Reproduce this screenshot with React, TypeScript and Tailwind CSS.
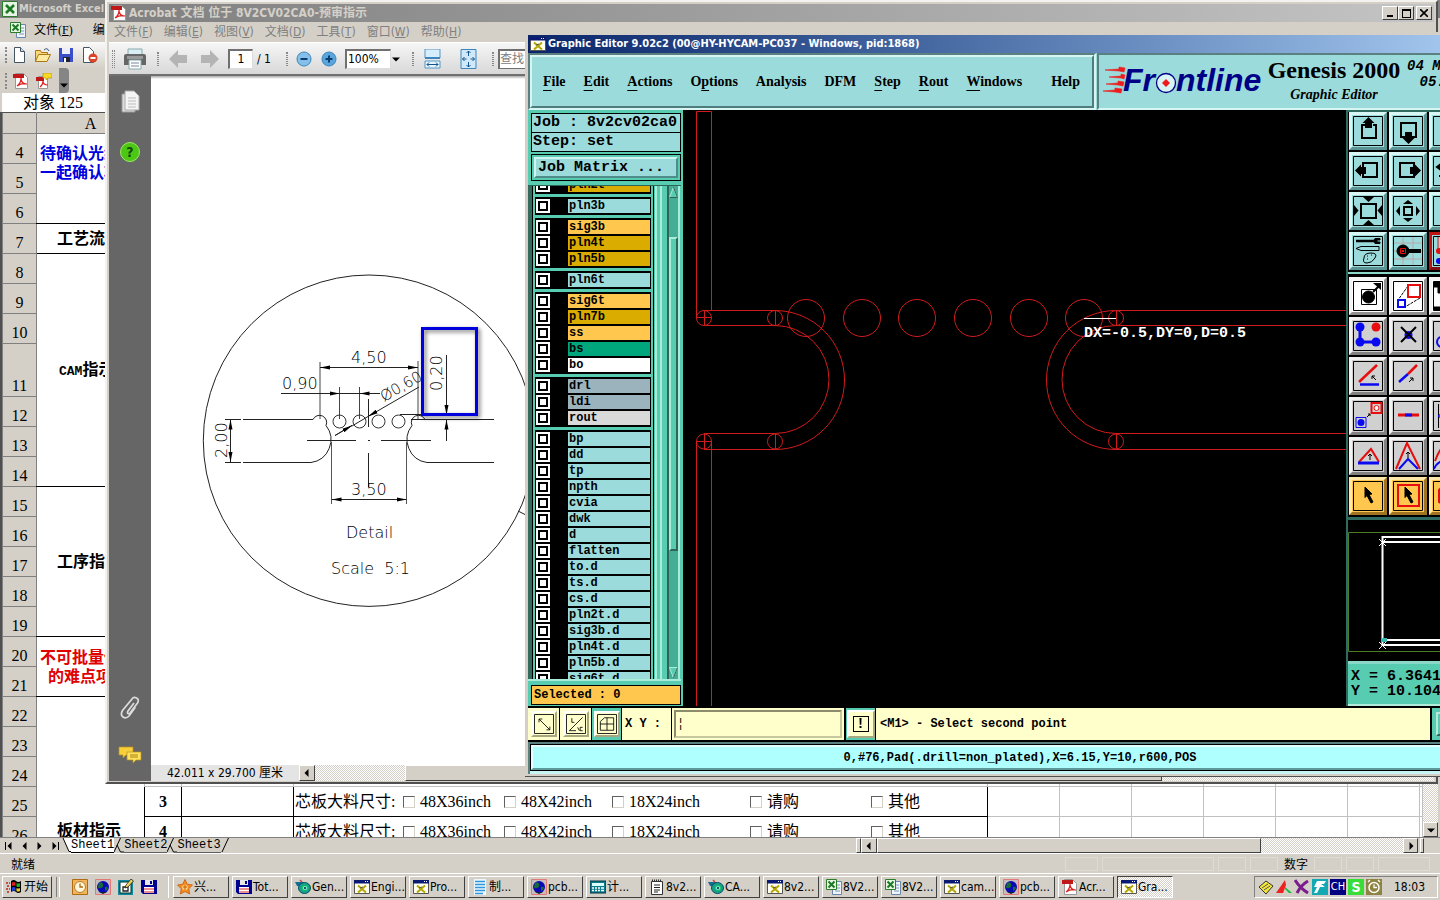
import React from "react";

/* ---------- small shared icons ---------- */

type IconName =
  | "star" | "floppy" | "gear" | "xwin" | "doc" | "globe" | "calc" | "note" | "excel" | "pdf" | "clock" | "pen" | "win";

function Icon({ name }: { name: IconName }) {
  return (
    <svg viewBox="0 0 16 16" className="size-4 shrink-0" aria-hidden="true">
      {name === "star" && (
        <>
          <path d="M8 .5l2.3 4.7 5.2.8-3.7 3.7.9 5.3L8 12.5l-4.7 2.5.9-5.3L.5 6l5.2-.8z" fill="#f58a1f" stroke="#c85a08" strokeWidth=".8" />
          <circle cx="8" cy="8.5" r="2.8" fill="#ffd27a" />
          <path d="M6 8h4M8 6v5" stroke="#c85a08" />
        </>
      )}
      {name === "floppy" && (
        <>
          <path d="M0 1h16v14H2l-2-2z" fill="#000090" />
          <path d="M4 1h8v5H4z" fill="#e8e8e8" />
          <path d="M9 2h2v3H9z" fill="#000090" />
          <path d="M3 8h10v6H3z" fill="#fff" />
          <path d="M3 10h10M3 13h10" stroke="#d22" strokeWidth="1.2" />
        </>
      )}
      {name === "gear" && (
        <>
          <path d="M0 3h9l-2 4H2z" fill="#1a6a96" />
          <ellipse cx="9.5" cy="9" rx="6" ry="5.5" fill="#18a08c" stroke="#064f5c" />
          <ellipse cx="10" cy="9" rx="3" ry="2.5" fill="#7fe6d2" stroke="#0b5" />
          <circle cx="10" cy="9" r="1" fill="#024" />
          <path d="M5 1l2 2" stroke="#b44" strokeWidth="1.5" />
        </>
      )}
      {name === "xwin" && (
        <>
          <path d="M.5 1.5h15v13H.5z" fill="#fffff4" stroke="#555" />
          <path d="M0 1h16v3.5H0z" fill="#0a1a72" />
          <path d="M11 2h1v1h-1zM13 2h1v1h-1z" fill="#fff" />
          <path d="M4 6.5l8 7M12 6.5l-8 7" stroke="#b4a800" strokeWidth="2" />
          <path d="M6 9l3-1" stroke="#555" />
        </>
      )}
      {name === "doc" && (
        <>
          <path d="M2 0h12v16H2z" fill="#eef8ff" />
          <path d="M3 2.5h10M3 5.5h10M3 8.5h10M3 11.5h10M3 14.5h8" stroke="#2f95dc" strokeWidth="1.5" />
        </>
      )}
      {name === "globe" && (
        <>
          <path d="M.5.5h15v15H.5z" fill="#c9bcbc" stroke="#e27878" />
          <circle cx="8" cy="8" r="6" fill="#0a0ab4" />
          <path d="M4 4q3-2 4 1t-2 4-3-1zM10 8q3-1 3 1t-3 3z" fill="#176a3a" />
          <path d="M4 13l8 0-4 2z" fill="#123" />
        </>
      )}
      {name === "calc" && (
        <>
          <path d="M0 2h16v12H0z" fill="#0a7c8c" stroke="#034" />
          <path d="M2 4h12v3H2z" fill="#d9ffff" />
          <path d="M2 9h2M5 9h2M8 9h2M11 9h3M2 11.5h2M5 11.5h2M8 11.5h2M11 11.5h3" stroke="#fff" strokeWidth="1.3" />
        </>
      )}
      {name === "note" && (
        <>
          <path d="M2.5 2.5h11v13h-11z" fill="#fff" stroke="#333" />
          <path d="M3 1.5h10" stroke="#333" strokeWidth="2" strokeDasharray="1 1" />
          <path d="M5 6h6M5 8.5h6M5 11h6M5 13h4" stroke="#222" />
        </>
      )}
      {name === "excel" && (
        <>
          <path d="M6.5 2.5h9v13h-9z" fill="#eef4fb" stroke="#6a86ac" />
          <path d="M9 6h5M9 9h5M9 12h5" stroke="#7c98bd" />
          <path d="M.5.5h10v10H.5z" fill="#e7f6e5" stroke="#2b7d2b" />
          <path d="M2.5 2.5l6 6M8.5 2.5l-6 6" stroke="#1c7a22" strokeWidth="2" />
        </>
      )}
      {name === "pdf" && (
        <>
          <path d="M2.5.5h8l4 4v11h-12z" fill="#fff" stroke="#999" />
          <path d="M0 1h11v4H0z" fill="#c01818" />
          <path d="M4 13c3-2 4-5 4-8 0 4 2 6 6 6-4-1-7 0-10 2z" fill="none" stroke="#d22" strokeWidth="1.2" />
        </>
      )}
      {name === "clock" && (
        <>
          <path d="M.5.5h15v15H.5z" fill="#f3b55c" stroke="#b06a10" />
          <circle cx="8" cy="8" r="5.5" fill="#fff6dc" stroke="#b97a22" />
          <path d="M8 4.5V8h3" stroke="#b06a10" fill="none" strokeWidth="1.3" />
        </>
      )}
      {name === "pen" && (
        <>
          <path d="M0 1h15v15H0z" fill="#0f8a9c" />
          <path d="M2 3h11v11H2z" fill="#fff" stroke="#033" />
          <path d="M5 8v4h5V8z" fill="none" stroke="#222" strokeWidth="1.3" />
          <path d="M7 9l1-3L13 0l2.500 2L10 8z" fill="#f2d25a" stroke="#222" strokeWidth=".8" />
        </>
      )}
      {name === "win" && (
        <>
          <path d="M5 2q3-2 5 0t5 0v11q-3 2-5 0t-5 0z" fill="#000" />
          <path d="M6 3.5q2-1 3.5 0V7Q8 6 6 7z" fill="#e02020" />
          <path d="M10.5 4q2 1 3.5 0v3.5q-2 1-3.5 0z" fill="#20b020" />
          <path d="M6 8.5q2-1 3.5 0V12Q8 11 6 12z" fill="#2040e0" />
          <path d="M10.5 9q2 1 3.5 0v3q-2 1-3.5 0z" fill="#f0d020" />
          <path d="M0 4h4M1 7h3M0 10h4M1 13h3" stroke="#c02020" strokeWidth="1.5" strokeDasharray="2 1" />
        </>
      )}
    </svg>
  );
}

function Triangle({ dir }: { dir: "left" | "right" | "down" }) {
  const d = dir === "left" ? "M5.5 0v8L1.500 4z" : dir === "right" ? "M2.5 0v8l4-4z" : "M0 2.500h8l-4 4z";
  return (
    <svg viewBox="0 0 8 8" className="size-2 shrink-0" aria-hidden="true">
      <path d={d} fill="#000" />
    </svg>
  );
}

const raised = "border border-t-white border-l-white border-r-[#404040] border-b-[#404040] bg-[#d4d0c8]";
const dither = "bg-[repeating-conic-gradient(#ffffff_0_25%,#d4d0c8_0_50%)] bg-[length:2px_2px]";

/* ---------- spreadsheet ---------- */

const sheetRows: { n: number; tall?: boolean; label?: React.ReactNode; span?: number; tone?: string; align?: string }[] = [
  { n: 4, span: 3, tone: "text-[#0000e0]", align: "pl-[3px] pt-[10px] align-top text-left", label: <>待确认光绘<br />一起确认项</> },
  { n: 5 },
  { n: 6 },
  { n: 7, span: 1, tone: "text-black", align: "pl-5 align-middle text-left", label: "工艺流程" },
  { n: 8, span: 7, tone: "text-black", align: "pl-[22px] align-middle text-left", label: <><span className="text-[13px] font-['Liberation_Mono',monospace]">CAM</span>指示</> },
  { n: 9 },
  { n: 10 },
  { n: 11, tall: true },
  { n: 12 },
  { n: 13 },
  { n: 14 },
  { n: 15, span: 5, tone: "text-black", align: "pl-5 align-middle text-left", label: "工序指示" },
  { n: 16 },
  { n: 17 },
  { n: 18 },
  { n: 19 },
  { n: 20, span: 2, tone: "text-[#e00000]", align: "pl-[3px] align-middle text-left", label: <>不可批量做<br /><span className="pl-2">的难点项目</span></> },
  { n: 21 },
  { n: 22, span: 5, tone: "text-black", align: "pl-5 pb-[6px] align-bottom text-left", label: "板材指示" },
  { n: 23 },
  { n: 24 },
  { n: 25 },
  { n: 26 },
];

function Materials({ row }: { row: number }) {
  return (
    <div className="grid h-[29px] grid-cols-[108px_101px_108px_138px_121px_1fr] items-center overflow-hidden whitespace-nowrap pl-px text-base leading-5">
      <span>芯板大料尺寸:</span>
      {["48X36inch", "48X42inch", "18X24inch", "请购", "其他"].map((t) => (
        <label key={t} htmlFor={`m${row}-${t}`} className="flex items-center gap-[5px]">
          <input
            id={`m${row}-${t}`}
            type="checkbox"
            className="size-3 appearance-none border border-t-[#606060] border-l-[#606060] border-r-[#d4d0c8] border-b-[#d4d0c8] bg-white"
          />
          {t}
        </label>
      ))}
    </div>
  );
}

function Excel() {
  return (
    <section className="flex min-h-0 flex-1 flex-col bg-[#d4d0c8]">
      <header className="flex h-[18px] items-center gap-px bg-[#808080] pl-0.5 text-[#d4d0c8] font-['DejaVu_Sans_Condensed','DejaVu_Sans','Noto_Sans_CJK_SC',sans-serif]">
        <svg viewBox="0 0 16 16" className="size-4" aria-hidden="true">
          <path d="M.5.5h15v15H.5z" fill="#e6f4e4" stroke="#2b7d2b" />
          <path d="M4 4l8 8M12 4l-8 8" stroke="#1c7a22" strokeWidth="2.6" />
        </svg>
        <h1 className="whitespace-nowrap text-[11px] font-bold">Microsoft Excel</h1>
      </header>
      <nav className="flex h-6 items-center gap-5 pl-2.5 text-xs font-['Liberation_Serif','Noto_Sans_CJK_SC',serif]">
        <Icon name="excel" />
        <button className="-ml-3">文件(<u>F</u>)</button>
        <button>编辑(<u>E</u>)</button>
      </nav>
      <div className="flex h-[26px] items-center gap-2 bg-linear-to-b from-[#fafafa] to-[#d4d0c8] pl-[5px]">
        <span className="h-4 w-px border-l-2 border-dotted border-[#888]" />
        <button aria-label="New" className="-ml-1">
          <svg viewBox="0 0 16 16" className="size-4"><path d="M3.5.5h6l4 4v11h-10z" fill="#fff" stroke="#456" /><path d="M9.5.5v4h4" fill="#cde" stroke="#456" /></svg>
        </button>
        <button aria-label="Open">
          <svg viewBox="0 0 16 16" className="size-4"><path d="M.5 14.5v-11h5l1 2h6v3" fill="#f9d778" stroke="#a87818" /><path d="M.5 14.5l3-7h12l-3.5 7z" fill="#ffeaa0" stroke="#a87818" /><path d="M9 3q3-3 5 1" fill="none" stroke="#357" /></svg>
        </button>
        <button aria-label="Save" className="-ml-px">
          <svg viewBox="0 0 16 16" className="size-4"><path d="M1 1h14v14H1z" fill="#3b50c8" /><path d="M4 1h8v6H4z" fill="#eef" /><path d="M5 10h7v5H5z" fill="#223" /><path d="M6 11h2v4H6z" fill="#fff" /></svg>
        </button>
        <button aria-label="Permission">
          <svg viewBox="0 0 16 16" className="size-4"><path d="M1.5.5h6l4 4v11h-10z" fill="#fff" stroke="#456" /><circle cx="11" cy="11" r="4.5" fill="#d8442a" /><path d="M8.5 11h5" stroke="#fff" strokeWidth="2" /></svg>
        </button>
      </div>
      <div className="flex h-[25px] items-center gap-[7px] pl-[5px]">
        <span className="h-4 w-px border-l-2 border-dotted border-[#888]" />
        <button aria-label="Convert to PDF" className="-ml-px"><Icon name="pdf" /></button>
        <button aria-label="PDF and comment">
          <svg viewBox="0 0 16 16" className="size-4"><path d="M2.5 3.5h9v12h-9z" fill="#fff" stroke="#999" /><path d="M0 4h8v4H0z" fill="#c01818" /><path d="M4 14c3-2 3-4 3-6 0 3 2 4 5 4" fill="none" stroke="#d22" strokeWidth="1.2" /><path d="M7 0h9v5h-4l-2 2V5H7z" fill="#f8d820" stroke="#a88a00" strokeWidth=".6" /></svg>
        </button>
        <span className="flex h-[25px] w-2.5 items-end justify-center rounded-r-sm bg-[#858585] pb-1"><Triangle dir="down" /></span>
      </div>
      <label className="ml-0.5 flex h-[19px] items-center bg-white">
        <input aria-label="Name box" defaultValue="对象 125" className="h-[18px] w-full bg-white pl-[21px] text-base leading-[18px] font-['Liberation_Serif','Noto_Sans_CJK_SC',serif]" />
      </label>
      <div className="flex min-h-0 flex-1 border-l-2 border-[#505050] font-['Liberation_Serif','Noto_Sans_CJK_SC',serif]">
        <div className="min-w-0 flex-1 overflow-hidden bg-white">
          <table className="w-full table-fixed border-collapse text-base leading-[19px]">
            <colgroup>
              <col className="w-[34px]" /><col className="w-[108px]" /><col className="w-[37px]" /><col className="w-[112px]" /><col className="w-[694px]" />
              <col className="w-[72px]" /><col className="w-[72px]" /><col className="w-[72px]" /><col className="w-[72px]" /><col className="w-[72px]" /><col className="w-[72px]" /><col />
            </colgroup>
            <thead>
              <tr className="h-[21px] bg-[#d4d0c8]">
                <th className="border border-t-[#505050] border-[#808080]" />
                {["A", "B", "C", "D", "E", "F", "G", "H", "I", "J", "K"].map((c) => (
                  <th key={c} className="border border-t-[#505050] border-[#808080] p-0 pt-0.5 font-normal leading-[18px]">{c}</th>
                ))}
              </tr>
            </thead>
            <tbody>
              {sheetRows.map((r) => {
                const material = r.n >= 25;
                const edge = material ? "border-black" : "border-[#c0c0c0]";
                return (
                  <tr key={r.n} className={r.tall ? "h-[53px]" : "h-[30px]"}>
                    <th className="border border-[#808080] bg-[#d4d0c8] p-0 pb-px align-bottom font-normal">{r.n}</th>
                    {r.label && (
                      <td rowSpan={r.span} className={`overflow-hidden border-y border-black p-0 font-bold whitespace-nowrap ${r.tone} ${r.align}`}>{r.label}</td>
                    )}
                    <td className={`border p-0 text-center font-bold ${edge}`}>{material ? r.n - 22 : ""}</td>
                    <td className={`border p-0 ${edge}`} />
                    <td className={`border p-0 ${edge}`}>{material && <Materials row={r.n} />}</td>
                    {[0, 1, 2, 3, 4, 5, 6].map((i) => (
                      <td key={i} className="border border-[#c0c0c0] p-0" />
                    ))}
                  </tr>
                );
              })}
            </tbody>
          </table>
        </div>
        <div className={`flex w-[17px] flex-col justify-end border-r-2 border-[#d4d0c8] ${dither}`}>
          <button aria-label="Scroll down" className={`flex size-[15px] items-center justify-center ${raised}`}><Triangle dir="down" /></button>
        </div>
      </div>
      <div className="flex h-4 items-center border-t border-[#808080] text-xs leading-4">
        <div className="flex w-[62px] items-center justify-around pl-0.5">
          <button aria-label="First sheet" className="flex"><span className="h-2 w-px bg-black" /><Triangle dir="left" /></button>
          <button aria-label="Previous sheet"><Triangle dir="left" /></button>
          <button aria-label="Next sheet"><Triangle dir="right" /></button>
          <button aria-label="Last sheet" className="flex"><Triangle dir="right" /><span className="h-2 w-px bg-black" /></button>
        </div>
        <div className="flex min-w-0 flex-1 items-center font-['Liberation_Mono',monospace]">
          <svg viewBox="0 0 9 15" className="h-[15px] w-[9px]" aria-hidden="true"><path d="M1 0l6 13.5h2V0z" fill="#fff" /><path d="M1 0l6 13.5h2" fill="none" stroke="#000" /></svg>
          <button className="border-b border-black bg-white leading-[14px]">Sheet1</button>
          {["Sheet2", "Sheet3"].map((s) => (
            <React.Fragment key={s}>
              <svg viewBox="0 0 10 15" className="h-[15px] w-2.5" aria-hidden="true"><path d="M0 14L6.5 0M3 7l3.5 7h3.5" fill="none" stroke="#000" /></svg>
              <button className="border-b border-[#606060] leading-[14px]">{s}</button>
            </React.Fragment>
          ))}
          <svg viewBox="0 0 10 15" className="h-[15px] w-2.5" aria-hidden="true"><path d="M1 14L7.5 0" fill="none" stroke="#000" /></svg>
        </div>
        <div className="flex h-[15px] w-[584px] shrink-0">
          <span className={`w-[5px] ${raised}`} />
          <button aria-label="Scroll left" className={`flex w-4 items-center justify-center ${raised}`}><Triangle dir="left" /></button>
          <span className={`w-[384px] ${raised}`} />
          <span className={`flex-1 ${dither}`} />
          <button aria-label="Scroll right" className={`flex w-[15px] items-center justify-center ${raised}`}><Triangle dir="right" /></button>
          <span className={`mr-4 ml-0.5 w-1 ${raised}`} />
        </div>
      </div>
      <footer className="flex h-5 items-center justify-between border-t border-white pr-2.5 pl-[11px] text-xs font-['Noto_Sans_CJK_SC',sans-serif]">
        <span>就绪</span>
        <div className="flex h-3.5 items-center gap-1">
          <span className="h-full w-[33px] border border-[#dedbd4]" />
          <span className="h-full w-[112px] border border-[#dedbd4]" />
          <span className="h-full w-7 border border-[#dedbd4]" />
          <span className="h-full w-7 border border-[#dedbd4]" />
          <span className="w-7 text-center leading-[14px]">数字</span>
          <span className="h-full w-7 border border-[#dedbd4]" />
          <span className="h-full w-7 border border-[#dedbd4]" />
          <span className="h-full w-[52px] border border-[#dedbd4]" />
        </div>
      </footer>
    </section>
  );
}

/* ---------- taskbar ---------- */

const tasks: [IconName, string][] = [
  ["star", "兴..."], ["floppy", "Tot..."], ["gear", "Gen..."], ["xwin", "Engi..."], ["xwin", "Pro..."], ["doc", "制..."],
  ["globe", "pcb..."], ["calc", "计..."], ["note", "8v2..."], ["gear", "CA..."], ["xwin", "8v2..."], ["excel", "8V2..."],
  ["excel", "8V2..."], ["xwin", "cam..."], ["globe", "pcb..."], ["pdf", "Acr..."], ["xwin", "Gra..."],
];

function Taskbar() {
  return (
    <nav className="flex h-[27px] shrink-0 items-center border-t border-white bg-[#d4d0c8] p-0.5 text-xs font-['DejaVu_Sans_Condensed','DejaVu_Sans','Noto_Sans_CJK_SC',sans-serif]">
      <button className={`flex h-[22px] w-[50px] items-center gap-0.5 pl-[3px] whitespace-nowrap ${raised}`}><Icon name="win" />开始</button>
      <span className="mx-1 h-5 w-1 border-x border-l-[#808080] border-r-white" />
      <div className="flex w-[104px] items-center gap-[7px] pl-2">
        {(["clock", "globe", "pen", "floppy"] as IconName[]).map((n) => (
          <button key={n} aria-label={n}><Icon name={n} /></button>
        ))}
      </div>
      <div className="flex gap-[3px] border-l border-white pl-1">
        {tasks.map(([icon, text], i) => (
          <button
            key={i}
            className={
              i === tasks.length - 1
                ? `flex h-[22px] w-14 items-center gap-px overflow-hidden border border-t-[#404040] border-l-[#404040] border-r-white border-b-white pl-[3px] whitespace-nowrap ${dither}`
                : `flex h-[22px] w-14 items-center gap-px overflow-hidden pl-[3px] whitespace-nowrap ${raised}`
            }
          >
            <Icon name={icon} />
            {text}
          </button>
        ))}
      </div>
      <div className="ml-auto flex h-[22px] w-[184px] items-center gap-0.5 border border-t-[#808080] border-l-[#808080] border-r-white border-b-white pl-[3px]">
        <svg viewBox="0 0 16 16" className="size-4" aria-hidden="true"><path d="M1 8l7-6 7 5-7 8z" fill="#f2e53a" stroke="#333" /><path d="M4 9l6-4M6 11l6-4" stroke="#555" /></svg>
        <svg viewBox="0 0 16 16" className="size-4" aria-hidden="true"><path d="M0 14L9 1l1 5-3 8z" fill="#e22" /><path d="M9 8l7 6h-3L9 10z" fill="#1b3" /></svg>
        <svg viewBox="0 0 16 16" className="size-4" aria-hidden="true"><path d="M1 1q5 8 13 13M14 2Q7 6 3 14" fill="none" stroke="#7a1c8c" strokeWidth="3" /></svg>
        <svg viewBox="0 0 16 16" className="size-4" aria-hidden="true"><path d="M0 0h16v16H0z" fill="#12a9b4" /><path d="M5 2h9l-2 3H9l4 3H8l-3 6H2l3-6H2z" fill="#fff" /></svg>
        <span className="flex size-4 items-center justify-center bg-[#000080] text-[11px] text-white">CH</span>
        <span className="flex size-4 items-center justify-center bg-[#38dd38] text-sm font-bold text-white">S</span>
        <svg viewBox="0 0 16 16" className="size-4" aria-hidden="true"><path d="M0 0h16v16H0z" fill="#8c8440" /><circle cx="8" cy="8.5" r="5" fill="none" stroke="#fff" strokeWidth="1.5" /><path d="M8 5.5v3h3M2 3l2-2M14 3l-2-2" fill="none" stroke="#fff" strokeWidth="1.3" /></svg>
        <time className="ml-auto pr-3">18:03</time>
      </div>
    </nav>
  );
}

/* ---------- PDF viewer ---------- */

function DetailDrawing() {
  return (
    <svg
      viewBox="151 79 400 685"
      className="h-[685px] w-[400px] shrink-0 font-['DejaVu_Sans',sans-serif] font-extralight"
      fill="none"
      stroke="#222"
      role="img"
      aria-label="Detail, scale 5:1"
    >
      <defs>
        <filter id="soft" x="-20%" y="-20%" width="150%" height="150%">
          <feDropShadow dx="2" dy="2" stdDeviation="2" floodColor="#000" floodOpacity=".55" />
        </filter>
        <marker id="tip" viewBox="0 0 10 5" refX="10" refY="2.5" markerWidth="10" markerHeight="5" orient="auto-start-reverse">
          <path d="M0 .5L10 2.5 0 4.5z" fill="#000" stroke="none" />
        </marker>
      </defs>
      <circle cx="369" cy="440.7" r="165.7" />
      <path d="M320 362v57M418 361v58M339.5 387v32M359.5 387v32" stroke="#444" />
      <path d="M320 367.5H418" markerStart="url(#tip)" markerEnd="url(#tip)" />
      <path d="M281 393.5H339.5" markerEnd="url(#tip)" />
      <path d="M380 393.5H359.5" markerEnd="url(#tip)" />
      <path d="M339 393.5h21" />
      {[339.5, 359.5, 378.5, 398.5].map((x) => (
        <circle key={x} cx={x} cy="421.5" r="6.5" stroke="#333" />
      ))}
      <path d="M243 419.5H313A7 7 0 1 1 326 425.5 23 23 0 0 1 311 462.5H243" />
      <path d="M494 419.5H425A7 7 0 1 0 412 425.5 23 23 0 0 0 427 462.5H494" />
      <path d="M307 440.5h49M368 440.5h2M381 440.5h50M368.5 399v28M368.5 453v34" />
      <path d="M225 419.5h16M225 462.5h16" />
      <path d="M230.5 419.5V462" markerStart="url(#tip)" markerEnd="url(#tip)" />
      <path d="M331.5 442v62M406.5 442v62" stroke="#555" />
      <path d="M331.5 499.5H406.5" markerStart="url(#tip)" markerEnd="url(#tip)" />
      <path d="M419 387L368 416.5" markerEnd="url(#tip)" />
      <path d="M368 416.5L352 426M335 435.5l17-10" />
      <path d="M335 435.5L352 425.5" markerEnd="url(#tip)" />
      <path d="M446.5 355v60" markerEnd="url(#tip)" />
      <path d="M446.5 441V419.5" markerEnd="url(#tip)" />
      <path d="M400 414.5h22M411 419.5h40M518 511l8 4" />
      <g fill="#000" stroke="none" fontSize="16">
        <text x="351" y="363">4,50</text>
        <text x="282" y="389">0,90</text>
        <text x="351" y="495">3,50</text>
        <text x="346" y="538">Detail</text>
        <text x="331" y="574" xmlSpace="preserve">Scale  5:1</text>
        <text transform="translate(227 458) rotate(-90)">2,00</text>
        <text transform="translate(442 391) rotate(-90)">0,20</text>
        <text transform="translate(384 402) rotate(-30)" fontSize="15">Ø0,60</text>
      </g>
      <rect x="422.5" y="328.5" width="54" height="86" stroke="#0000dc" strokeWidth="3" filter="url(#soft)" />
    </svg>
  );
}

function Grip() {
  return <span className="h-[18px] w-[3px] border-x border-dotted border-[#888]" />;
}

function Acrobat() {
  return (
    <section className="absolute top-0 right-0.5 left-[105px] flex h-[784px] flex-col border-2 border-t-[#f4f2ee] border-l-[#f4f2ee] border-r-[#505050] border-b-[#505050] bg-[#d4d0c8] p-0.5 pb-px text-xs font-['DejaVu_Sans_Condensed','DejaVu_Sans','Noto_Sans_CJK_SC',sans-serif]">
      <header className="flex h-[18px] shrink-0 items-center bg-linear-to-r from-[#808080] to-[#c4c4c4] pr-0.5 pl-0.5 text-[#d4d0c8]">
        <Icon name="pdf" />
        <h2 className="flex-1 pl-0.5 font-bold whitespace-nowrap">Acrobat 文档 位于 8V2CV02CA0-预审指示</h2>
        <button aria-label="Minimize" className={`flex h-3.5 w-4 items-end justify-center pb-0.5 ${raised}`}><span className="h-0.5 w-1.5 bg-black" /></button>
        <button aria-label="Maximize" className={`flex h-3.5 w-4 items-center justify-center ${raised}`}><span className="h-[9px] w-[9px] border border-t-2 border-black" /></button>
        <button aria-label="Close" className={`ml-0.5 flex h-3.5 w-4 items-center justify-center ${raised}`}>
          <svg viewBox="0 0 8 8" className="size-2"><path d="M0 0l8 8M8 0L0 8" stroke="#000" strokeWidth="1.6" /></svg>
        </button>
      </header>
      <nav className="flex h-5 shrink-0 items-center gap-[11px] pl-[5px] text-[#808080]">
        {[["文件", "F"], ["编辑", "E"], ["视图", "V"], ["文档", "D"], ["工具", "T"], ["窗口", "W"], ["帮助", "H"]].map(([t, k]) => (
          <button key={k} className="whitespace-nowrap">{t}(<u>{k}</u>)</button>
        ))}
      </nav>
      <div className="flex h-[34px] shrink-0 items-center border-t border-b-2 border-t-white border-b-[#707070] bg-linear-to-b from-[#f6f6f6] to-[#d8d8d8] pl-[3px]">
        <Grip />
        <button aria-label="Print" className="ml-[9px]">
          <svg viewBox="0 0 22 22" className="size-[22px]"><path d="M4 1h14v7H4z" fill="#d8eef4" stroke="#8aa" /><path d="M0 8q0-2 2-2h18q2 0 2 2v9H0z" fill="#666" /><path d="M3 8h16v3H3z" fill="#999" /><path d="M5 12h12v9H5z" fill="#fff" stroke="#8aa" /><path d="M7 15h8M7 18h8" stroke="#789" /></svg>
        </button>
        <span className="ml-[11px]"><Grip /></span>
        <button aria-label="Previous page" className="ml-2.5"><svg viewBox="0 0 18 20" className="h-5 w-[18px]"><path d="M0 10L9 1v5h9v8H9v5z" fill="#b4b4b4" /></svg></button>
        <button aria-label="Next page" className="ml-3.5"><svg viewBox="0 0 18 20" className="h-5 w-[18px]"><path d="M18 10L9 1v5H0v8h9v5z" fill="#b4b4b4" /></svg></button>
        <input aria-label="Page" defaultValue="1" className="ml-[9px] h-5 w-[25px] border border-t-2 border-l-2 border-[#707070] border-r-[#ddd] border-b-[#ddd] bg-white text-center" />
        <span className="ml-1 whitespace-nowrap">/ 1</span>
        <span className="ml-[15px]"><Grip /></span>
        <button aria-label="Zoom out" className="ml-2"><svg viewBox="0 0 16 16" className="size-4"><circle cx="8" cy="8" r="7" fill="#86c0ea" stroke="#3c86bd" /><path d="M4.5 8h7" stroke="#0c3d70" strokeWidth="2" /></svg></button>
        <button aria-label="Zoom in" className="ml-[9px]"><svg viewBox="0 0 16 16" className="size-4"><circle cx="8" cy="8" r="7" fill="#5aa5dc" stroke="#3c86bd" /><path d="M4.5 8h7M8 4.5v7" stroke="#0c3d70" strokeWidth="2" /></svg></button>
        <select aria-label="Zoom level" className="ml-2 h-5 w-[46px] appearance-none border border-t-2 border-l-2 border-[#707070] border-r-[#ddd] border-b-[#ddd] bg-white pl-px"><option>100%</option></select>
        <span className="ml-px"><Triangle dir="down" /></span>
        <span className="ml-3"><Grip /></span>
        <button aria-label="Fit width" className="ml-2.5"><svg viewBox="0 0 18 20" className="h-5 w-[18px]"><path d="M1 0h15v9H1z" fill="#d6edfb" stroke="#5596c4" /><path d="M1 8h15v2H1z" fill="#3c86bd" /><path d="M1 12h15v7H1z" fill="#e6f5ff" stroke="#5596c4" /><path d="M3 15.5h11M5 13.5l-2 2 2 2M12 13.5l2 2-2 2" fill="none" stroke="#14558c" /></svg></button>
        <button aria-label="Fit page" className="ml-[18px]"><svg viewBox="0 0 18 20" className="h-5 w-[18px]"><path d="M1 .5h15v19H1z" fill="#cfe8fa" stroke="#3c86bd" /><path d="M8.5 2v5M8.5 13v5M2.5 10h4M10.5 10h4M6.500 4l2-2 2 2M6.5 16l2 2 2-2M4.500 8l-2 2 2 2M12.5 8l2 2-2 2" fill="none" stroke="#14558c" /></svg></button>
        <span className="ml-3.5"><Grip /></span>
        <input aria-label="Find" placeholder="查找" className="ml-1 h-5 w-24 border border-t-2 border-l-2 border-[#707070] bg-white placeholder:text-[#808080]" />
      </div>
      <div className="flex min-h-0 flex-1">
        <aside className="flex w-[42px] shrink-0 flex-col items-center bg-[#666] pt-[14px] pb-[17px]">
          <button aria-label="Pages" className="pl-0.5"><svg viewBox="0 0 20 24" className="h-6 w-5"><path d="M1 4h13v18H1z" fill="#ddd" stroke="#999" /><path d="M4 1h9l5 5v14H4z" fill="#f4f4f4" stroke="#aaa" /><path d="M7 8h8M7 11h8M7 14h8M7 17h8" stroke="#bbb" /></svg></button>
          <button aria-label="Help" className="mt-[28px]">
            <span className="flex size-5 items-center justify-center rounded-full border border-[#9be86a] bg-[#4cc814] text-sm font-bold text-[#12480a]">?</span>
          </button>
          <button aria-label="Attachments" className="mt-auto"><svg viewBox="0 0 20 24" className="h-6 w-5"><path d="M14 7L8 15q-1 2 0 2.500t2-.5L17.500 7q2-3.500-1-5T12 3L2.500 14.500q-2.500 4.500.5 6.500t6-1L15.500 11" fill="none" stroke="#dcdcdc" strokeWidth="1.7" /></svg></button>
          <button aria-label="Comments" className="mt-[26px]"><svg viewBox="0 0 24 18" className="h-[18px] w-6"><path d="M1 1h14v8H8l-3 3V9H1z" fill="#f6cf3a" stroke="#b8901a" strokeWidth=".7" /><path d="M9 6h14v8h-5l-3 3v-3H9z" fill="#ffe25e" stroke="#b8901a" strokeWidth=".7" /><path d="M12 9h8M12 11h8" stroke="#a88210" /></svg></button>
        </aside>
        <div className="flex min-w-0 flex-1 flex-col bg-white">
          <div className="h-[3px] shrink-0 bg-linear-to-b from-[#aaa] to-white" />
          <div className="flex min-h-0 flex-1 overflow-hidden"><DetailDrawing /></div>
          <div className={`flex h-4 shrink-0 ${dither}`}>
            <span className="flex w-[148px] items-center justify-center bg-[#e4e4e4] whitespace-nowrap">42.011 x 29.700 厘米</span>
            <button aria-label="Scroll left" className={`flex w-4 items-center justify-center ${raised}`}><Triangle dir="left" /></button>
            <span className={`ml-[90px] w-[757px] ${raised}`} />
          </div>
        </div>
      </div>
    </section>
  );
}

/* ---------- CAM editor ---------- */

type Layer = [string, string];
const aqua = "bg-[#9cdbdb]";
const amber = "bg-[#ffc74e]";
const gold = "bg-[#dbac00]";
const slate = "bg-[#9ab3bd]";
const layerGroups: Layer[][] = [
  [["pln2t", gold]],
  [["pln3b", aqua]],
  [["sig3b", amber], ["pln4t", gold], ["pln5b", gold]],
  [["pln6t", aqua]],
  [["sig6t", amber], ["pln7b", gold], ["ss", amber], ["bs", "bg-[#00a67c]"], ["bo", "bg-white"]],
  [["drl", slate], ["ldi", slate], ["rout", "bg-[#d9d9d9]"]],
  [
    ["bp", aqua], ["dd", aqua], ["tp", aqua], ["npth", aqua], ["cvia", aqua], ["dwk", aqua], ["d", aqua], ["flatten", aqua],
    ["to.d", aqua], ["ts.d", aqua], ["cs.d", aqua], ["pln2t.d", aqua], ["sig3b.d", aqua], ["pln4t.d", aqua], ["pln5b.d", aqua], ["sig6t.d", aqua],
  ],
];

function LayerPanel() {
  return (
    <aside className="flex w-[155px] shrink-0 flex-col bg-[#58ccb0] pt-[3px] pr-0.5 pl-[3px] text-[15px] font-bold text-black">
      <div className="h-5 shrink-0 overflow-hidden border border-black bg-[#9cdbdb] pl-px leading-[18px] whitespace-nowrap">Job : 8v2cv02ca0</div>
      <div className="-mt-px h-5 shrink-0 border border-black bg-[#9cdbdb] pl-px leading-[18px] whitespace-nowrap">Step: set</div>
      <div className="mt-0.5 h-[27px] shrink-0 border border-black p-0.5">
        <button className="block h-full w-full border-2 border-t-[#d0f4f0] border-l-[#d0f4f0] border-r-[#4f8c8c] border-b-[#4f8c8c] bg-[#9cdbdb] pl-0.5 text-left leading-[17px] whitespace-nowrap">Job Matrix ...</button>
      </div>
      <div className="-ml-[3px] mt-1 flex h-[496px] shrink-0 overflow-hidden border-t border-b-2 border-t-[#2c6656] border-b-[#a8ecd9]">
        <div className="w-[5px] border-r border-black bg-[#356b5c]" />
        <ul className="-mt-2.5 flex h-[520px] w-[121px] flex-col gap-[3px] border-r border-black px-0.5">
          {layerGroups.map((g, i) => (
            <li key={i} className="shrink-0 bg-black px-px py-px">
              {g.map(([name, tone]) => (
                <label key={name} htmlFor={`layer-${name}`} className="flex h-4 items-center gap-[18px]">
                  <input
                    id={`layer-${name}`}
                    type="checkbox"
                    className="size-3.5 shrink-0 appearance-none border-2 border-white bg-white shadow-[inset_0_0_0_2px_#000000]"
                  />
                  <span className={`h-3.5 flex-1 pl-px text-xs leading-[14px] ${tone}`}>{name}</span>
                </label>
              ))}
            </li>
          ))}
        </ul>
        <div className="ml-px w-[7px] border-r-2 border-l-2 border-[#a8ecd9] bg-[#58ccb0]" />
        <div className="ml-[5px] flex w-[13px] flex-col items-center border-r-2 border-l-2 border-l-[#2c6656] border-r-[#a8ecd9] bg-[#45ad95]">
          <button aria-label="Scroll layers up" className="h-3"><svg viewBox="0 0 9 12" className="h-3 w-[9px]"><path d="M4.5 1L8.500 11.5h-8z" fill="#58ccb0" stroke="#a8ecd9" /><path d="M4.5 1l4 10.5h-8" fill="none" stroke="#2c6656" /></svg></button>
          <span className="mt-[39px] h-[314px] w-full border-2 border-t-[#a8ecd9] border-l-[#a8ecd9] border-r-[#2c6656] border-b-[#2c6656] bg-[#58ccb0]" />
          <button aria-label="Scroll layers down" className="mt-auto h-3"><svg viewBox="0 0 9 12" className="h-3 w-[9px]"><path d="M.5.5h8L4.500 11z" fill="#58ccb0" stroke="#a8ecd9" /><path d="M8.5.5L4.500 11" stroke="#2c6656" /></svg></button>
        </div>
      </div>
      <div className="mt-1 h-5 shrink-0 border border-black bg-[#ffc74e] pl-0.5 text-xs leading-[18px]">Selected : 0</div>
    </aside>
  );
}

function BoardCanvas() {
  return (
    <svg viewBox="683 110 663 596" preserveAspectRatio="xMinYMin slice" className="min-w-0 flex-1 bg-black" fill="none" stroke="#d21c1c" role="img" aria-label="Board outline with drill pads">
      <path d="M696.5 318V111.5h15V310M696.5 441v265M711.5 441v265" />
      <path d="M704 310.5H775A69.5 69.5 0 0 1 775 449.5H704" />
      <path d="M704 325.5H775A54 54 0 0 1 775 433.5H704" />
      <path d="M1346 310.5H1116A69.5 69.5 0 0 0 1116 449.5H1346" />
      <path d="M1346 325.5H1116A54 54 0 0 0 1116 433.5H1346" />
      {[704, 775, 1116].map((x) => (
        <g key={x}>
          <circle cx={x} cy="318" r="7.5" />
          <circle cx={x} cy="441.5" r="7.5" />
          <path d={`M${x}.5 310v16M${x}.5 433v16`} />
        </g>
      ))}
      <path d="M696 317.5h16M696 441.5h16" />
      {[806, 862, 917, 973, 1029, 1084].map((x) => (
        <circle key={x} cx={x} cy="318" r="18.5" />
      ))}
      <path d="M1084 318.5h32" stroke="#fff" />
      <text x="1084" y="337" fill="#fff" stroke="none" fontSize="15" fontWeight="700">DX=-0.5,DY=0,D=0.5</text>
    </svg>
  );
}

type Tone = "aqua" | "white" | "grey" | "amber" | "red";
const toneClass: Record<Tone, string> = {
  aqua: "bg-[#9cdbdb] border-t-[#d8f6f4] border-l-[#d8f6f4] border-r-[#5b9494] border-b-[#5b9494]",
  white: "bg-white border-t-[#f4f4f4] border-l-[#f4f4f4] border-r-[#909090] border-b-[#909090]",
  grey: "bg-[#d0d0d0] border-t-[#f2f2f2] border-l-[#f2f2f2] border-r-[#828282] border-b-[#828282]",
  amber: "bg-[#ffc74e] border-t-[#ffe9a8] border-l-[#ffe9a8] border-r-[#a07420] border-b-[#a07420]",
  red: "bg-[#9cdbdb] border-t-[#c01414] border-l-[#c01414] border-r-[#801010] border-b-[#801010]",
};

const R = "#e60e0e";
const B = "#0a0af0";
const cursor = "M12 6l7 7-3 .5 4 7.500-2 1-4-7.500-2 2z";
const tiles: [string, Tone, React.ReactNode][] = [
  ["Pan up", "aqua", <><path d="M12 9H9v13h14V9h-3" strokeWidth="2" /><path d="M15.5 1l6 6H19v5h-7V7H9.500z" fill="#000" stroke="none" /></>],
  ["Pan down", "aqua", <><path d="M12 21H8V7h15v14h-4" strokeWidth="2" /><path d="M15.5 28l6-6H19v-6h-7v6H9.500z" fill="#000" stroke="none" /></>],
  ["Previous view", "aqua", <path d="M12 26V15M9 18l3-4 3 4" />],
  ["Pan left", "aqua", <><path d="M10 11V7h14v14H10v-3" strokeWidth="2" /><path d="M2 14.5l6-6V11h5v7H8v2.500z" fill="#000" stroke="none" /></>],
  ["Pan right", "aqua", <><path d="M21 11V7H7v14h14v-3" strokeWidth="2" /><path d="M28 14.5l-6-6V11h-5v7h5v2.500z" fill="#000" stroke="none" /></>],
  ["Swap view", "aqua", <path d="M4 11h12M8 8l-4 3 4 3M6 20h10" strokeWidth="2" />],
  ["Zoom in", "aqua", <><path d="M8 8h15v14H8z" strokeWidth="2" /><path d="M10 1h11l-5.5 5zM10 29h11l-5.5-5zM1 9v11l4.5-5.500zM29 9v11l-4.5-5.500z" fill="#000" stroke="none" /></>],
  ["Zoom out", "aqua", <><path d="M11 11h8v8h-8z" strokeWidth="2" /><path d="M10 8h10l-5-4zM10 22h10l-5 4zM7 10v10l-4-5zM23 10v10l4-5z" fill="#000" stroke="none" /></>],
  ["Home view", "aqua", <path d="M9 14h8v-4" strokeWidth="2" />],
  ["Tools", "aqua", <><path d="M3 5h17" strokeWidth="2.500" /><path d="M27 2.500h-5l-2 2.500 2 2.500h5V6h-3V4h3z" fill="#000" /><path d="M3 12.5l5-2h18v4H8z" /><path d="M11 22q0-5 7-5t4 5-8 5-3-5zM14 20h1M18 19h1M14 23h1" /></>],
  ["Snap pad", "aqua", <><path d="M10 1v28M20 1v28M1 7h28M1 15h28M1 23h28" stroke="#b9a8a8" /><path d="M14 15h14" strokeWidth="4" /><circle cx="10" cy="15" r="6" fill="#000" /><path d="M7.500 12.500h5v5h-5z" stroke={R} /><path d="M9 14h2v2H9z" fill={R} stroke="none" /></>],
  ["Net points", "red", <><path d="M5 1v12" stroke={R} /><circle cx="6" cy="15" r="3" fill={R} stroke="none" /><circle cx="6" cy="25" r="3" fill={B} stroke="none" /></>],
  ["Move feature", "white", <><path d="M8.5 8.500h15v15h-15z" /><circle cx="15.5" cy="16" r="6" fill="#000" /><path d="M20 11l6-6" strokeWidth="2" /><path d="M20 2h8v7z" fill="#000" stroke="none" /></>],
  ["Scale feature", "white", <><path d="M15 5L5 19M27 17L12 26" strokeDasharray="3 1" /><path d="M15 4h12v12H15z" stroke={R} strokeWidth="2" /><path d="M5 19h7v7H5z" stroke={B} strokeWidth="2" /></>],
  ["Pattern", "white", <path d="M1 1h28v9h-3V6h-3v6h-3V5h-3v7h-3V6H8v6H5V6H1zM1 26h28v3H1z" fill="#000" />],
  ["Connect points", "grey", <><path d="M7 6v15h16" stroke={B} strokeWidth="3" /><g stroke="none" fill={B}><circle cx="7" cy="6" r="4.5" /><circle cx="7" cy="21" r="4.5" /><circle cx="23" cy="21" r="4.5" /></g><circle cx="23" cy="6" r="4.5" fill={R} stroke="none" /></>],
  ["Delete point", "grey", <><circle cx="15.5" cy="14" r="4" fill={B} stroke="none" /><path d="M8 6l15 15M23 6L8 21" strokeWidth="2" /></>],
  ["Break arc", "grey", <circle cx="9" cy="21" r="5" stroke={B} strokeWidth="2" />],
  ["Change angle", "grey", <><path d="M6 21L24 4" stroke={R} strokeWidth="2.5" /><path d="M7 23.5h19" stroke={B} strokeWidth="2.5" /><path d="M23 19l-4-4m0 3v-3h3" /></>],
  ["Extend line", "grey", <><path d="M15 13l9-9" stroke={R} strokeWidth="2.5" /><path d="M6 21l9-8" stroke={B} strokeWidth="2.5" /><path d="M16 21l4-4m-3 0h3v3" /></>],
  ["Blank", "grey", null],
  ["Copy pad", "grey", <><path d="M18.5 2h10v10h-10z" stroke={R} strokeWidth="2" /><circle cx="23.5" cy="7" r="2.5" fill="#fff" stroke={R} /><path d="M3 16.5h10v10H3z" stroke={B} /><circle cx="8" cy="21.5" r="3.5" fill={B} stroke="none" /><path d="M14 16l3-3m-2 0h2v2" /></>],
  ["Merge line", "grey", <><path d="M5 14h21" stroke={R} strokeWidth="3" /><path d="M12 14h7" stroke={B} strokeWidth="3" /></>],
  ["Spacing", "grey", <><path d="M5.500 3v24" /><path d="M5 15h10M9 12l-4 3 4 3" stroke={B} /></>],
  ["Close corner", "grey", <><path d="M6 21L18 8l8 13" stroke={R} strokeWidth="2" /><path d="M5 22h21" stroke={B} strokeWidth="3" /><path d="M17 19v-6m-2 2l2-2 2 2" /></>],
  ["Move corner", "grey", <><path d="M3 28L14 2l13 26" stroke={R} strokeWidth="2" /><path d="M6 28l9-10 10 10" stroke={B} strokeWidth="2" /><path d="M15 17v-6m-2 2l2-2 2 2" /></>],
  ["Curve corner", "grey", <><path d="M2 20Q8 4 14 3" stroke={R} strokeWidth="2" /><path d="M1 28q3-8 12-9" stroke={B} strokeWidth="2" /></>],
  ["Select", "amber", <path d={cursor} fill="#000" />],
  ["Select in frame", "amber", <><path d="M5 4h21v21H5z" stroke={R} strokeWidth="2" /><path d={cursor} fill="#000" /></>],
  ["Select in polygon", "amber", <path d="M12 3L6 9v12l6 4" stroke={R} strokeWidth="2" />],
];

function ToolTile({ tile }: { tile: [string, Tone, React.ReactNode] }) {
  const [name, tone, art] = tile;
  return (
    <button aria-label={name} className={`size-[38px] border-3 p-px ${toneClass[tone]}`}>
      <svg viewBox="0 0 30 30" className="size-[30px]" fill="none" stroke="#000">
        <path d="M.5.5h29v29H.5z" />
        {art}
      </svg>
    </button>
  );
}

function ToolPanel() {
  return (
    <aside className="flex w-[124px] shrink-0 flex-col border-l-2 border-[#2f6b60] bg-black">
      <div className="grid grid-cols-[repeat(3,38px)] gap-0.5 border-t-2 border-b-2 border-t-[#2f6b60] border-b-[#8cd8c8] pl-px pb-0.5">
        {tiles.slice(0, 12).map((t) => <ToolTile key={t[0]} tile={t} />)}
      </div>
      <div className="mt-[3px] grid grid-cols-[repeat(3,38px)] gap-0.5 pl-px pb-0.5">
        {tiles.slice(12).map((t) => <ToolTile key={t[0]} tile={t} />)}
      </div>
      <div className="h-[3px] bg-[#2f6b60]" />
      <svg viewBox="1348 520 122 141" className="h-[141px] w-[122px]" fill="none" role="img" aria-label="Panel overview">
        <path d="M1348.5 532.5h140v119h-140z" stroke="#4c7c26" />
        <path d="M1382.5 646V537h100M1382 542h100M1382 640h100M1382 645h100" stroke="#fff" strokeWidth="2" />
        <path d="M1379 539l7 7M1386 539l-7 7M1379 642l7 7M1386 642l-7 7" stroke="#fff" />
        <path d="M1381 638h6v4h-6z" fill="#38b8b0" />
      </svg>
      <output className="flex flex-1 flex-col justify-center border-t-3 border-b-2 border-t-[#8cd8c8] border-b-[#b4ecdc] bg-[#58ccb0] pl-[3px] text-[15px] leading-[15px] font-bold whitespace-pre">
        <span>X = 6.36415</span>
        <span>Y = 10.1042</span>
      </output>
    </aside>
  );
}

const menus: [string, string, string][] = [
  ["", "F", "ile"], ["", "E", "dit"], ["", "A", "ctions"], ["O", "p", "tions"], ["Analysis", "", ""], ["DFM", "", ""], ["", "S", "tep"], ["", "R", "out"], ["", "W", "indows"],
];

function FrontlineLogo() {
  return (
    <svg viewBox="0 0 162 34" className="h-[34px] w-[162px] shrink-0 font-['Liberation_Sans',sans-serif]" role="img" aria-label="Frontline">
      <path d="M2 5l14-1V2l6 1-1 4-5-1zM6 12l12-1V9l4 1-1 4-3-1zM3 19l12-1v-2l6 1-1 4-5-1zM0 26l12-1v-2l7 1-1 4-6-1z" fill="#ee1c1c" stroke="#ee1c1c" strokeWidth=".6" />
      <g fontSize="32" fontWeight="700" fontStyle="italic" fill="#000087">
        <text x="20" y="26">Fr</text>
        <text x="73" y="26">ntline</text>
      </g>
      <circle cx="63" cy="18" r="9.5" fill="#d8f4f4" stroke="#000087" strokeWidth="1.3" />
      <path d="M63 14l4 4-4 4-4-4z" fill="#ee1c1c" />
    </svg>
  );
}

function Genesis() {
  const bevel = "border-2 border-t-[#5a8080] border-l-[#5a8080] border-r-[#d6f5f3] border-b-[#d6f5f3]";
  const inner = "border-2 border-t-[#d6f5f3] border-l-[#d6f5f3] border-r-[#4f7c7c] border-b-[#4f7c7c]";
  return (
    <section className="absolute top-8 -right-[30px] left-[525px] flex h-[744px] flex-col border-t-3 border-b-2 border-l-3 border-[#d4d0c8] bg-black shadow-[0_1px_0_#505050] font-['Liberation_Mono',monospace]">
      <header className="flex h-[18px] shrink-0 items-center gap-0.5 bg-linear-to-r from-[#0a246a] to-[#a6caf0] pl-0.5 text-white font-['DejaVu_Sans_Condensed','DejaVu_Sans',sans-serif]">
        <Icon name="xwin" />
        <h2 className="whitespace-nowrap text-[11px] font-bold">Graphic Editor 9.02c2 (00@HY-HYCAM-PC037 - Windows, pid:1868)</h2>
      </header>
      <div className="flex h-[57px] shrink-0 bg-[#9cdbdb] font-['Liberation_Serif',serif]">
        <div className={`w-[568px] ${bevel}`}>
          <nav className={`flex h-full items-center pr-3 pl-[11px] text-sm font-bold ${inner}`}>
            <div className="flex flex-1 gap-[18px]">
              {menus.map(([a, k, b]) => (
                <button key={a + k + b} className="whitespace-nowrap">
                  {a}<span className="underline underline-offset-4">{k}</span>{b}
                </button>
              ))}
            </div>
            <button>Help</button>
          </nav>
        </div>
        <div className={`ml-px flex min-w-0 flex-1 overflow-hidden pl-1 ${bevel}`}>
          <div className="flex items-center"><FrontlineLogo /></div>
          <div className="flex w-[138px] shrink-0 flex-col items-center pt-0.5 font-bold whitespace-nowrap">
            <span className="text-2xl leading-[26px]">Genesis 2000</span>
            <span className="text-sm leading-6 italic">Graphic Editor</span>
          </div>
          <time className="pt-[3px] pl-1 text-center text-sm leading-4 font-bold whitespace-pre italic font-['Liberation_Mono',monospace]">04 Mar 2010{"\n"}05:56 PM</time>
        </div>
      </div>
      <div className="flex min-h-0 flex-1">
        <LayerPanel />
        <BoardCanvas />
        <ToolPanel />
      </div>
      <div className="flex h-9 shrink-0 border-y-2 border-black bg-[#ffffcc] text-xs font-bold text-black">
        {[
          { n: "Absolute", green: false, art: <path d="M6 6l13 13M6 10V6h4M15 19h4v-4" /> },
          { n: "Angle", green: false, art: <path d="M4 20L20 4M4 20h8M14 16l2 4M7 5v5h3M20 16h-3v4h3" /> },
          { n: "Grid", green: true, art: <path d="M9 4.500h11v15H4V9zM12 4.500v15M4 12h16" /> },
        ].map((b) => (
          <div key={b.n} className={`flex shrink-0 items-center justify-center border-r border-black ${b.green ? "w-[30px] bg-[#58ccb0]" : "w-8"}`}>
            <button aria-label={b.n} className="border-2 border-t-white border-l-white border-r-[#a8a880] border-b-[#a8a880] bg-[#ffffcc] p-px">
              <svg viewBox="0 0 24 24" className="size-5" fill="none" stroke="#000"><path d="M.6.6h22.8v22.8H.6z" />{b.art}</svg>
            </button>
          </div>
        ))}
        <label htmlFor="xy" className="flex w-[49px] items-center pl-[3px] whitespace-pre">X Y :</label>
        <div className="border-x border-black p-0.5">
          <input id="xy" className="h-full w-[168px] border-2 border-t-[#8c8c6c] border-l-[#8c8c6c] border-r-[#c8c8a0] border-b-[#c8c8a0] bg-[#ffffcc] pl-px font-normal" defaultValue="¦" />
        </div>
        <div className="flex w-[31px] shrink-0 items-center justify-center border-x border-black bg-[#58ccb0]">
          <button aria-label="Alert" className="border-2 border-t-white border-l-white border-r-[#a8a880] border-b-[#a8a880] bg-[#ffffcc] p-1">
            <span className="flex size-4 items-center justify-center border border-black text-sm">!</span>
          </button>
        </div>
        <output className="flex w-[554px] shrink-0 items-center pl-1 whitespace-nowrap">&lt;M1&gt; - Select second point</output>
        <div className="flex-1 border-l-2 border-black bg-[#58ccb0] p-1"><button aria-label="Stop" className="h-full w-full border-2 border-t-[#b4ecdc] border-l-[#b4ecdc] border-r-[#2c6656] border-b-[#2c6656]" /></div>
      </div>
      <footer className="h-8 shrink-0 border-t-2 border-l-2 border-[#5a8080] bg-[#c8f4f4]">
        <div className="border border-black">
          <p className="h-[25px] border-2 border-t-[#e4ffff] border-l-[#e4ffff] border-b-[#5e9a9a] bg-[#b0ffff] pl-10 text-center text-xs leading-[22px] font-bold whitespace-nowrap">0,#76,Pad(.drill=non_plated),X=6.15,Y=10,r600,POS</p>
        </div>
      </footer>
    </section>
  );
}

export default function App() {
  return (
    <main className="relative flex h-screen w-full flex-col overflow-hidden bg-[#d4d0c8] text-black">
      <Excel />
      <Acrobat />
      <Genesis />
      <Taskbar />
    </main>
  );
}
